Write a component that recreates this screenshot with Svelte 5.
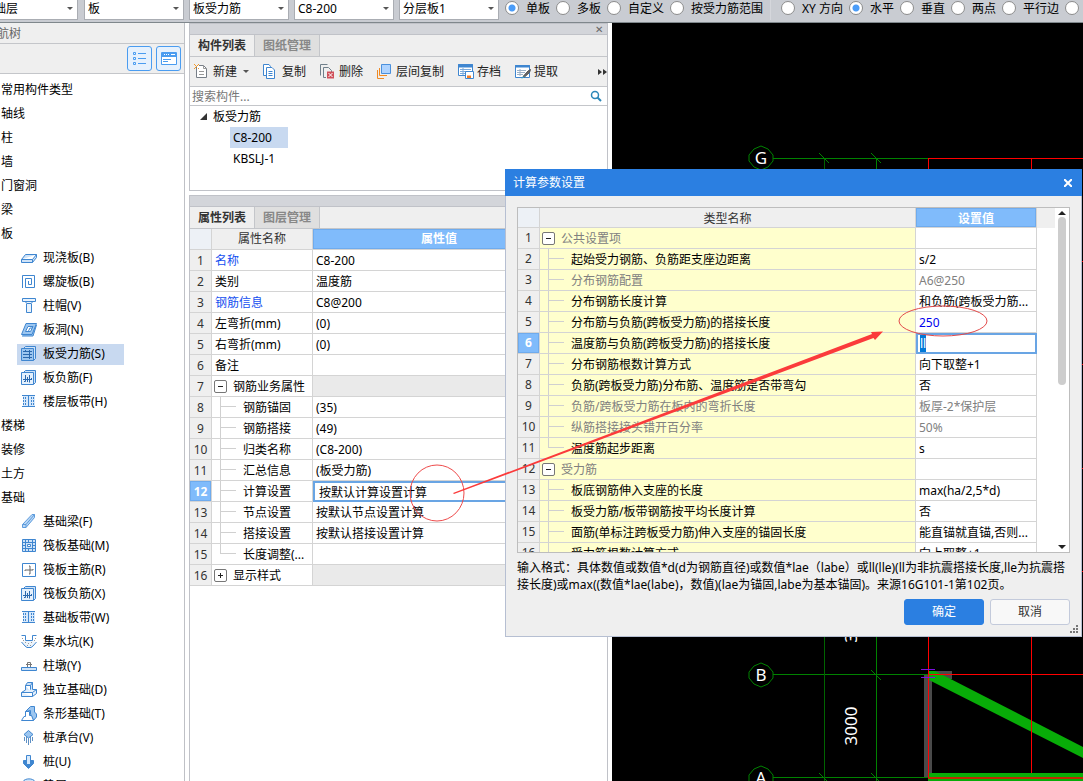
<script>
    import { onMount } from "svelte";

    const BLUE = "#3f86d0";
    const PALE = "#cfe3f8";

    // each icon is a list of [path, fill, stroke]
    const icons = {
        slab: [["M.5 10.5L4.5 5.5H15.5L11.5 10.5ZM.5 10.5V13.5H11.5L15.5 8.5V5.5M11.5 10.5V13.5", PALE, BLUE]],
        spiral: [["M1.5 15V2.5H13.5V14.5H4.5V5.5H10.5V11.5H7.5V8", "none", BLUE]],
        cap: [["M1.5 1.5H14.5V4.5H1.5ZM4 4.5L6 6.5H10L12 4.5M5.5 6.5V15.5H10.5V6.5", "#eaf3fc", BLUE]],
        hole: [["M5 2.5H15.5L11 13.5H.5ZM15.5 4L12 15H1", "#9cc6f0", BLUE], ["M7 5.5H12L9.5 10.5H4.5Z", "#fff", BLUE], ["M7.5 10L9 7H11", "none", BLUE]],
        rebar: [["M2.5 3.5L4.5 1.5H14.5V13.5L12.5 15.5", PALE, BLUE], ["M.5 3.5H12.5V15.5H.5Z", "#9cc6f0", BLUE], ["M2 6.5H11M2 9.5H11M2 12.5H11M4.5 5V7M8.5 5V14", "none", "#2a68ad"]],
        negative: [["M2.5 3.5L4.5 1.5H14.5V13.5L12.5 15.5", PALE, BLUE], ["M.5 3.5H12.5V15.5H.5Z", "#e4f0fc", BLUE], ["M2 10.5H11M4.5 6V12.5H3M8.5 6V13.5M6.5 8V13M10.5 9V11", "none", "#2a68ad"]],
        strip: [["M2 3H14V14H2Z", "#d8e9fb", "none"], ["M7.5 3V13M1 2.5H14M1 13.5H14", "none", BLUE], ["M2.5 4V6M2.5 7V9M2.5 10V12M4.5 4V6M4.5 7V9M4.5 10V12M10.5 4V6M10.5 7V9M10.5 10V12M12.5 4V6M12.5 7V9M12.5 10V12", "none", BLUE]],
        beam: [["M1.500 11.5L11 1.5H13.5V4.5L5 14.5H1.5ZM1.5 11.5H5V14.5M5 11.5L13.5 1.5", "#b9d7f6", "#5c9bdc"]],
        raft: [["M1.5 2.5H14.5V14.5H1.5ZM4.5 2V15M11.5 2V15M1 5.5H15M1 11.5H15M7.5 2V5M7.5 12V15M1 8.5H4M12 8.5H15", PALE, BLUE], ["M6.5 7.5H9.5V9.5H6.5Z", "#fff", BLUE]],
        mainbar: [["M1.5 2.5H14.5V15.5H1.5Z", "#fff", BLUE], ["M4 10V9H12V8M8 13H9V5H8", "none", "#666"]],
        pit: [["M1 9L4 13L6 15H10L12 13L15 9L12 8H4Z", "#edf4fb", "none"], ["M.5 2.5H4.5V7.5H11.5V2.5H15.5M.5 9L4 13L6 14.5H10L12 13L15.5 9", "none", BLUE], ["M1 5.500H2M2 7.5H3M4 9.5H5M7 10.5H8M10 9.5H11M6 12.5H7M9 12.5H10M13 7.5H14M14 5.5H15", "none", "#999"]],
        pier: [["M6.5 5.5H9.5V10.5H6.5ZM5 7.5H11", "#fff", "#777"], ["M.5 10.5H15.5V13.5H.5Z", PALE, BLUE]],
        footing: [["M4.500 4.5L6.5 1.5H11.5V8.5L9.5 10.5H4.5ZM9.5 10.5V4.5H4.500M9.5 4.5L11.5 1.5", PALE, BLUE], ["M4.5 9L.5 11.5V15.5H11.5L15.5 12.5V8.5H11.5M.5 11.5H11.5V15.5M11.5 11.5L15.5 8.5", "#e4f0fc", BLUE]],
        stripfoot: [["M4.5 6.5L9.5 1.5H13.5V7L15.5 9V12L12.5 15.5L9.5 9V5.5Z", "#9cc6f0", BLUE], ["M4.5 6.5H8.5V10.5H10.5L12.5 15.5H.5L3 11.5H4.5Z", "#fff", BLUE]],
        pilecap: [["M7.5 1.500L12 5.5L7.5 9L3 5.5Z", "#9cc6f0", BLUE], ["M3.5 8V12M5.5 8V14M7.5 9V16M9.5 8V14M11.5 8V12", "none", "#5f90c4"]],
        pile: [["M5.5 7.5H2.5V10.5L7.5 15.5L12.5 10.5V7.5H9.5", BLUE, BLUE], ["M5.5 2.5H9.5V11.5H5.5Z", "#d8eafc", BLUE]],
        cushion: [["M2 4.5C4 1 12 1 14 4.5Z", PALE, BLUE]],
        create: [["M2.5 3V14.5H12.5V5.5L9.5 2.5H5", "#fff", "#777f88"], ["M9.5 2.5V5.5H12.5M5 8.5H10M5 11.5H10", "none", "#999"], ["M0 1.500H1M4 1.500H5M2 3.5H3M0 5.5H1M4 5.5H5M1 3L2 2M4 3L3 2M1 4L2 5", "none", "#f39b2d"]],
        copy: [["M.5 1.500H6L7.5 3.5V12.5H.5Z", "#fff", BLUE], ["M3.5 4.500H9L11.5 7V15.5H3.5Z", "#fff", BLUE], ["M5.5 8.5H9.5M5.5 10.5H9.5M5.5 12.5H9.5", "none", BLUE]],
        remove: [["M.5 12.5V1.500H7.5M3.5 14.5V4.500H8.5L11.5 7.5V9M3.5 14.5H6", "none", "#70808c"], ["M7 8.500H14V15.5H7Z", "#d0505a", "none"], ["M8.5 10L12.5 14M12.5 10L8.5 14", "none", "#fff"]],
        layers: [["M4.5 1.500H13.5V10.5H4.5Z", "#aed3ff", "#4a90dd"], ["M2.500 5V12.5H10M.5 7V15.5H7", "none", "#f08a24"]],
        save: [["M.5 1.500H14.5V12.5H.5Z", "#fff", BLUE], ["M.5 1.500H14.5V4H.5Z", BLUE, BLUE], ["M2 6.500H13M2 8.500H8M2 10.5H7M5 5V12", "none", "#7aa9db"], ["M7.5 8.500H15.5V15.5H7.5Z", "#fff", BLUE], ["M9 12.5H13V15H9Z", "#ef7c27", "none"]],
        extract: [["M.5 2.500H14.5V14.5H.5Z", "#fff", BLUE], ["M.5 2.500H14.5V4H.5Z", BLUE, BLUE], ["M2 7.500H11M2 9.500H10M2 11.5H8M5 6V13", "none", "#9ab0c7"], ["M8 13.5L13 8L15.500 6.500L14.5 9.500L9.500 14Z", "#666", "#555"], ["M7 15.5L9 13.5", "none", "#25b6d2"]]
    };

    const combos = ["基础层", "板", "板受力筋", "C8-200", "分层板1"];
    const modes = ["单板", "多板", "自定义", "按受力筋范围"];
    const directions = ["XY 方向", "水平", "垂直", "两点", "平行边", "弧线"];
    let mode = "单板";
    let direction = "水平";

    const nav = [
        ["常用构件类型"], ["轴线"], ["柱"], ["墙"], ["门窗洞"], ["梁"], ["板"],
        ["现浇板(B)", "slab"],
        ["螺旋板(B)", "spiral"],
        ["柱帽(V)", "cap"],
        ["板洞(N)", "hole"],
        ["板受力筋(S)", "rebar"],
        ["板负筋(F)", "negative"],
        ["楼层板带(H)", "strip"],
        ["楼梯"], ["装修"], ["土方"], ["基础"],
        ["基础梁(F)", "beam"],
        ["筏板基础(M)", "raft"],
        ["筏板主筋(R)", "mainbar"],
        ["筏板负筋(X)", "negative"],
        ["基础板带(W)", "strip"],
        ["集水坑(K)", "pit"],
        ["柱墩(Y)", "pier"],
        ["独立基础(D)", "footing"],
        ["条形基础(T)", "stripfoot"],
        ["桩承台(V)", "pilecap"],
        ["桩(U)", "pile"],
        ["垫层(X)", "cushion"]
    ];
    let current = "板受力筋(S)";

    const tools = [
        ["新建", "create"],
        ["复制", "copy"],
        ["删除", "remove"],
        ["层间复制", "layers"],
        ["存档", "save"],
        ["提取", "extract"]
    ];

    const props = [
        { name: "名称", value: "C8-200", link: true },
        { name: "类别", value: "温度筋" },
        { name: "钢筋信息", value: "C8@200", link: true },
        { name: "左弯折(mm)", value: "(0)" },
        { name: "右弯折(mm)", value: "(0)" },
        { name: "备注", value: "" },
        { name: "钢筋业务属性", group: "minus" },
        { name: "钢筋锚固", value: "(35)", child: true },
        { name: "钢筋搭接", value: "(49)", child: true },
        { name: "归类名称", value: "(C8-200)", child: true },
        { name: "汇总信息", value: "(板受力筋)", child: true },
        { name: "计算设置", value: "按默认计算设置计算", child: true, active: true },
        { name: "节点设置", value: "按默认节点设置计算", child: true },
        { name: "搭接设置", value: "按默认搭接设置计算", child: true },
        { name: "长度调整(...", value: "", child: true, last: true },
        { name: "显示样式", group: "plus" }
    ];

    const params = [
        { name: "公共设置项", group: "minus", dim: true },
        { name: "起始受力钢筋、负筋距支座边距离", value: "s/2", child: true },
        { name: "分布钢筋配置", value: "A6@250", child: true, dim: true },
        { name: "分布钢筋长度计算", value: "和负筋(跨板受力筋...", child: true },
        { name: "分布筋与负筋(跨板受力筋)的搭接长度", value: "250", child: true, changed: true },
        { name: "温度筋与负筋(跨板受力筋)的搭接长度", value: "ll", child: true, active: true },
        { name: "分布钢筋根数计算方式", value: "向下取整+1", child: true },
        { name: "负筋(跨板受力筋)分布筋、温度筋是否带弯勾", value: "否", child: true },
        { name: "负筋/跨板受力筋在板内的弯折长度", value: "板厚-2*保护层", child: true, dim: true },
        { name: "纵筋搭接接头错开百分率", value: "50%", child: true, dim: true },
        { name: "温度筋起步距离", value: "s", child: true, last: true },
        { name: "受力筋", group: "minus", dim: true },
        { name: "板底钢筋伸入支座的长度", value: "max(ha/2,5*d)", child: true },
        { name: "板受力筋/板带钢筋按平均长度计算", value: "否", child: true },
        { name: "面筋(单标注跨板受力筋)伸入支座的锚固长度", value: "能直锚就直锚,否则...", child: true },
        { name: "受力筋根数计算方式", value: "向上取整+1", child: true }
    ];

    let editor;

    onMount(() => {
        editor.focus();
        editor.select();
    });
</script>

{#snippet icon(name)}
    <svg class="icon" width="16" height="16" viewBox="0 1 16 16" aria-hidden="true">
        {#each icons[name] as [d, fill, stroke]}
            <path {d} {fill} {stroke} />
        {/each}
    </svg>
{/snippet}

{#snippet nameCell(row)}
    <div class="name-cell">
        {#if row.group}
            <button class="toggle {row.group}" aria-label={row.name}></button>
        {:else if row.child}
            <span class="branch" class:last={row.last}></span>
        {/if}
        <span class="label">{row.name}</span>
    </div>
{/snippet}

<div class="app">
    <header class="topbar">
        {#each combos as item}
            <div class="combo">
                <select aria-label={item}><option>{item}</option></select>
            </div>
        {/each}
        <div class="radios">
            {#each modes as item}
                <label><input type="radio" bind:group={mode} value={item} /><span>{item}</span></label>
            {/each}
        </div>
        <div class="radios second">
            {#each directions as item}
                <label><input type="radio" bind:group={direction} value={item} /><span>{item}</span></label>
            {/each}
        </div>
    </header>

    <main>
        <aside class="sidebar">
            <div class="side-title"><span>导航树</span></div>
            <div class="side-tools">
                <button aria-label="列表">
                    <svg width="16" height="16" viewBox="0 0 16 16">
                        <path d="M1.5 1.5H3.5V3.5H1.5ZM1.5 6.5H3.5V8.5H1.5ZM1.5 11.5H3.5V13.5H1.5ZM6 2.5H14M6 7.5H14M6 12.5H14" fill="none" stroke="#4a9cf0" />
                    </svg>
                </button>
                <button aria-label="面板">
                    <svg width="16" height="16" viewBox="0 0 16 16">
                        <path d="M.5 1.5H15.5V13.5H.5Z" fill="#fff" stroke="#4a9cf0" />
                        <path d="M1 2H15V6H1Z" fill="#4a9cf0" />
                        <path d="M3 3.5H4M5 3.5H6M7 3.5H8M10 3.5H14" stroke="#fff" />
                        <path d="M2 8.5H10M2 10.5H7" stroke="#4a9cf0" />
                    </svg>
                </button>
            </div>
            <ul class="nav">
                {#each nav as [label, name]}
                    <li class:child={name}>
                        <button class:selected={label === current} on:click={() => current = label}>
                            {#if name}{@render icon(name)}{/if}
                            {label}
                        </button>
                    </li>
                {/each}
            </ul>
        </aside>

        <div class="docks">
            <section class="dock upper">
                <div class="strip"><button aria-label="关闭">✕</button></div>
                <div class="tabs">
                    <button class="on">构件列表</button>
                    <button>图纸管理</button>
                </div>
                <div class="tools">
                    {#each tools as [label, name]}
                        <button class:drop={name === "create"}>{@render icon(name)}{label}</button>
                    {/each}
                    <button class="more" aria-label="更多">
                        <svg width="9" height="6" viewBox="0 0 9 6"><path d="M0 0L4 3L0 6ZM5 0L9 3L5 6Z" fill="#333" /></svg>
                    </button>
                </div>
                <div class="search">
                    <input type="text" placeholder="搜索构件..." aria-label="搜索构件" />
                    <svg width="12" height="12" viewBox="0 0 12 12" aria-hidden="true">
                        <circle cx="5" cy="5" r="3.5" fill="none" stroke="#2b87b8" stroke-width="1.5" />
                        <path d="M7.5 7.5L11 11" stroke="#2b87b8" stroke-width="2" />
                    </svg>
                </div>
                <ul class="tree">
                    <li class="root"><svg width="7" height="7" viewBox="0 0 7 7"><path d="M7 0V7H0Z" fill="#333" /></svg>板受力筋</li>
                    <li><button class="selected">C8-200</button></li>
                    <li><button>KBSLJ-1</button></li>
                </ul>
            </section>

            <section class="dock lower">
                <div class="strip"></div>
                <div class="tabs">
                    <button class="on">属性列表</button>
                    <button>图层管理</button>
                </div>
                <div class="prop-wrap">
                    <table class="props">
                        <thead>
                            <tr><th class="num"></th><th class="prop-name">属性名称</th><th class="value">属性值</th></tr>
                        </thead>
                        <tbody>
                            {#each props as row, i}
                                <tr class:active={row.active} class:group={row.group}>
                                    <td class="num">{i + 1}</td>
                                    <td class:link={row.link}>{@render nameCell(row)}</td>
                                    <td class="value">
                                        {#if row.active}
                                            <input type="text" bind:value={row.value} aria-label={row.name} />
                                        {:else}
                                            {row.value ?? ""}
                                        {/if}
                                    </td>
                                </tr>
                            {/each}
                        </tbody>
                    </table>
                </div>
            </section>
        </div>

        <div class="canvas">
            <svg width="471" height="758" viewBox="612 23 471 758">
                <g fill="none" stroke="#008200">
                    <path d="M773 158.5H928M773 674.5H928M773 777.5H928M876.5 158V781" />
                    <path d="M824.5 158V781" stroke="#006400" />
                    <path d="M819 153L829 163M871 153L881 163M871 670L881 680M819 773L829 783M871 773L881 783" />
                    {#each [158, 675, 778] as y}
                        <path d="M761 {y - 12}l7 3l5 6l0 6l-5 6l-7 3l-7 -3l-5 -6l0 -6l5 -6z" />
                    {/each}
                </g>
                <path d="M924 675H932V777H924ZM928 671H952V679H928Z" fill="#4a4a4a" />
                <path d="M929 671H935L1083 747V758L929 680ZM928 773H1083V781H928Z" fill="#08ac08" />
                <path d="M928 158.5H1083M928.5 158V778M1031.5 158V773M928 674.5H1083M928 261.5H1083M928 364.5H1083M928 468.5H1083M928 571.5H1083" fill="none" stroke="#f00" />
                <path d="M928 778H1083" stroke="#c22a00" stroke-width="2" />
                <path d="M921 669.5H935M921 677.5H935" stroke="#7b10e0" />
                <g class="axis">
                    <text x="761" y="164">G</text>
                    <text x="761" y="681">B</text>
                    <text x="761" y="784">A</text>
                    <text transform="translate(857 726) rotate(-90)">3000</text>
                    <text transform="translate(857 638) rotate(-90)">3</text>
                </g>
            </svg>
        </div>
    </main>

    <div class="dialog" role="dialog" aria-label="计算参数设置">
        <div class="title">
            <span>计算参数设置</span>
            <button aria-label="关闭">
                <svg width="8" height="8" viewBox="0 0 8 8"><path d="M0 0L8 8M8 0L0 8" stroke="#fff" stroke-width="2" /></svg>
            </button>
        </div>
        <div class="body">
            <div class="grid-box">
                <div class="grid-view">
                    <table class="params">
                        <thead>
                            <tr><th class="num"></th><th>类型名称</th><th class="value">设置值</th><th class="rest"></th></tr>
                        </thead>
                        <tbody>
                            {#each params as row, i}
                                <tr class:active={row.active} class:dim={row.dim}>
                                    <td class="num">{i + 1}</td>
                                    <td class="yellow">{@render nameCell(row)}</td>
                                    <td class="value" class:changed={row.changed}>
                                        {#if row.active}
                                            <input type="text" bind:this={editor} bind:value={row.value} aria-label={row.name} />
                                        {:else}
                                            {row.value ?? ""}
                                        {/if}
                                    </td>
                                    <td class="rest"></td>
                                </tr>
                            {/each}
                        </tbody>
                    </table>
                </div>
                <div class="scrollbar">
                    <i class="up"></i>
                    <div class="track"><div class="thumb"></div></div>
                    <i class="down"></i>
                </div>
            </div>
            <p>
                输入格式：具体数值或数值*d(d为钢筋直径)或数值*lae（labe）或ll(lle)(ll为非抗震搭接长度,lle为抗震搭<br />接长度)或max((数值*lae(labe)，数值)(lae为锚固,labe为基本锚固)。来源16G101-1第102页。
            </p>
            <div class="actions">
                <button class="primary">确定</button>
                <button>取消</button>
            </div>
        </div>
        <svg class="grip" width="9" height="9" viewBox="0 0 9 9" aria-hidden="true">
            <path d="M6 0h2v2h-2zM3 3h2v2h-2zM6 3h2v2h-2zM0 6h2v2h-2zM3 6h2v2h-2zM6 6h2v2h-2z" fill="#777" />
        </svg>
    </div>

    <svg class="marks" width="1083" height="781" viewBox="0 0 1083 781" aria-hidden="true">
        <ellipse cx="437" cy="493" rx="27" ry="28" fill="none" stroke="#ee4b4b" />
        <ellipse cx="943" cy="321" rx="44" ry="15" fill="none" stroke="#e34a4a" />
        <path d="M453 493L872 334L871 332L883 331.500L875 340L873.500 338L454 494Z" fill="#fb3b3b" />
    </svg>
</div>

<style>
    :global(body) {
        overflow: hidden;
    }

    .app {
        position: relative;
        display: flex;
        flex-direction: column;
        height: 100vh;
        overflow: hidden;
        background: #fff;
        color: #000;
        font-family: "Noto Sans", "Noto Sans CJK SC", sans-serif;
        font-size: 12px;
        line-height: 20px;
    }

    button, input, select {
        font: inherit;
        color: inherit;
        margin: 0;
        padding: 0;
        border: none;
        border-radius: 0;
        background: none;
        box-sizing: border-box;
        outline: none;
    }

    button {
        white-space: nowrap;
    }

    ul {
        list-style: none;
        margin: 0;
        padding: 0;
    }

    svg {
        flex: none;
        display: block;
    }

    .icon {
        overflow: visible;
    }

    .topbar {
        display: flex;
        align-items: flex-end;
        flex: none;
        height: 23px;
        box-sizing: border-box;
        padding-bottom: 2px;
        background: #c9ccd2;
        border-bottom: 1px solid #7f878c;
        overflow: hidden;
    }

    .combo {
        position: relative;
        flex: none;
        width: 100px;
        margin-right: 5px;
    }

    .combo:first-child {
        margin-left: -22px;
        margin-right: 6px;
    }

    .combo select {
        display: block;
        width: 100%;
        height: 24px;
        padding: 2px 4px 0 3px;
        appearance: none;
        background: #fff;
        border: 1px solid #aaadb3;
    }

    .combo::after {
        content: "";
        position: absolute;
        right: 5px;
        top: 11px;
        border: 3px solid transparent;
        border-top-color: #555;
        border-bottom: none;
    }

    .radios {
        display: flex;
        flex: none;
        gap: 6px;
        padding: 0 7px 0 1px;
    }

    .second {
        padding-left: 10px;
        border-left: 1px solid #d5d7dc;
    }

    .radios label {
        display: flex;
        align-items: center;
        gap: 7px;
        height: 24px;
        white-space: nowrap;
    }

    .radios span {
        padding-top: 2px;
    }

    .radios input {
        appearance: none;
        width: 14px;
        height: 14px;
        border: 1px solid #8c8c8c;
        border-radius: 50%;
        background: #fff;
    }

    .radios input:checked {
        background: radial-gradient(circle, #4a9cf8 3px, #fff 4px);
    }

    main {
        display: flex;
        flex: 1;
        min-height: 0;
    }

    .sidebar {
        flex: none;
        width: 185px;
        box-sizing: border-box;
        border-right: 1px solid #bfc1c6;
        overflow: hidden;
    }

    .side-title {
        height: 20px;
        line-height: 22px;
        background: #efefef;
        border-bottom: 1px solid #c4c6ca;
        color: #666;
        overflow: hidden;
    }

    .side-title span {
        margin-left: -15px;
    }

    .side-tools {
        display: flex;
        justify-content: flex-end;
        gap: 4px;
        height: 29px;
        padding: 0 3px;
        align-items: center;
        background: #efefef;
        border-bottom: 1px solid #c4c6ca;
    }

    .side-tools button {
        display: flex;
        align-items: center;
        justify-content: center;
        width: 25px;
        height: 25px;
        background: #e6f1fd;
        border: 1px solid #4a9cf0;
        border-radius: 3px;
    }

    .nav {
        padding-top: 4px;
    }

    .nav li {
        display: flex;
        align-items: center;
        height: 24px;
    }

    .nav li.child {
        padding-left: 17px;
    }

    .nav button {
        display: flex;
        align-items: center;
        gap: 6px;
        height: 21px;
        padding-left: 1px;
    }

    .nav .child button {
        padding: 0 19px 0 4px;
    }

    .selected {
        background: #c8d9f0;
    }

    .docks {
        display: flex;
        flex-direction: column;
        flex: none;
        width: 419px;
        margin: 0 4px;
    }

    .dock {
        border: 1px solid #c0c2c8;
        box-sizing: border-box;
    }

    .upper {
        height: 168px;
        margin-bottom: 4px;
    }

    .lower {
        flex: 1;
        border-bottom: none;
    }

    .strip {
        display: flex;
        justify-content: flex-end;
        height: 10px;
        background: #d3d5da;
        border-bottom: 1px solid #c0c2c8;
    }

    .strip button {
        width: 16px;
        font-size: 10px;
        line-height: 10px;
        color: #666;
    }

    .tabs {
        display: flex;
        height: 21px;
        background: #efefef;
        border-bottom: 1px solid #c4c6ca;
    }

    .tabs button {
        width: 65px;
        font-weight: bold;
        color: #888;
        background: #dfdfdf;
        border-right: 1px solid #c4c6ca;
    }

    .tabs .on {
        color: #333;
        background: #efefef;
    }

    .tools {
        display: flex;
        align-items: center;
        gap: 14px;
        height: 29px;
        padding: 0 0 0 4px;
        background: #efefef;
        border-bottom: 1px solid #c4c6ca;
        color: #222;
    }

    .tools button {
        display: flex;
        align-items: center;
        gap: 3px;
    }

    .tools .drop::after {
        content: "";
        margin-left: 3px;
        border: 3px solid transparent;
        border-top-color: #555;
        border-bottom: none;
    }

    .tools .more {
        margin-left: auto;
    }

    .search {
        display: flex;
        align-items: center;
        height: 18px;
        padding: 0 5px 0 2px;
        border-bottom: 1px solid #c4c6ca;
    }

    .search input {
        flex: 1;
        height: 18px;
        padding-top: 2px;
    }

    .search input::placeholder {
        color: #777;
    }

    .tree li {
        height: 21px;
        padding-left: 40px;
    }

    .tree .root {
        display: flex;
        align-items: center;
        gap: 6px;
        padding-left: 10px;
    }

    .tree button {
        min-width: 58px;
        height: 21px;
        padding-left: 3px;
        text-align: left;
    }

    .prop-wrap {
        padding-right: 41px;
    }

    .lower .tabs {
        height: 21px;
    }

    table {
        width: 100%;
        border-collapse: separate;
        border-spacing: 0;
        table-layout: fixed;
    }

    th, td {
        box-sizing: border-box;
        height: 21px;
        padding: 0;
        border-right: 1px solid #d4d4d4;
        border-bottom: 1px solid #d4d4d4;
        line-height: 20px;
        white-space: nowrap;
        overflow: hidden;
    }

    th {
        background: #efefef;
        color: #333;
        font-weight: normal;
    }

    .num {
        width: 22px;
        text-align: center;
        color: #333;
        background: #efefef;
    }

    th.num {
        background: #edf1f6;
    }

    .prop-name {
        width: 101px;
    }

    th.value {
        background: #80bbfb;
        color: #fff;
        font-weight: bold;
        box-shadow: inset 0 0 0 1px #6fabed;
    }

    td.value {
        padding-left: 3px;
        background: #fff;
    }

    .group td.value {
        background: #eaeaea;
    }

    .link {
        color: #1450f0;
    }

    .active td.num {
        background: #80bbfb;
        color: #fff;
        font-weight: bold;
        box-shadow: inset 0 0 0 1px #6fabed;
    }

    .props td {
        padding-top: 2px;
        line-height: 18px;
    }

    .props td:nth-child(2) {
        padding-top: 0;
    }

    .active td.value {
        padding: 0;
        border: none;
    }

    td input {
        display: block;
        width: 100%;
        height: 21px;
        padding-left: 4px;
        border: 2px solid #69a5e4;
    }

    .params td input {
        padding-left: 2px;
    }

    td input::selection {
        background: #0078d7;
        color: #fff;
    }

    .name-cell {
        display: flex;
        align-items: center;
        height: 20px;
        padding-left: 2px;
    }

    .label {
        margin-left: 1px;
        padding-top: 2px;
    }

    .branch {
        flex: none;
        width: 16px;
        height: 20px;
        margin: 0 6px;
        background:
            linear-gradient(#d0d0d0, #d0d0d0) 0 0 / 1px 100% no-repeat,
            linear-gradient(#d0d0d0, #d0d0d0) 0 9px / 16px 1px no-repeat;
    }

    .branch.last {
        background-size: 1px 10px, 16px 1px;
    }

    .toggle {
        flex: none;
        width: 13px;
        height: 13px;
        margin-right: 5px;
        border: 1px solid #777;
        border-radius: 2px;
        background: linear-gradient(#222, #222) center / 5px 1px no-repeat #fff;
    }

    .toggle.plus {
        background:
            linear-gradient(#222, #222) center / 5px 1px no-repeat,
            linear-gradient(#222, #222) center / 1px 5px no-repeat #fff;
    }

    .canvas {
        flex: 1;
        min-width: 0;
        overflow: hidden;
        background: #000;
    }

    .axis {
        fill: #fff;
        font-size: 17px;
        text-anchor: middle;
    }

    .dialog {
        position: absolute;
        top: 169px;
        right: 1px;
        display: flex;
        flex-direction: column;
        width: 577px;
        height: 468px;
        box-sizing: border-box;
        background: #efefef;
        border: 1px solid #b6bfd2;
        border-top: none;
    }

    .title {
        display: flex;
        align-items: center;
        justify-content: space-between;
        flex: none;
        height: 27px;
        margin: 0 -1px;
        padding: 0 10px 0 8px;
        background: #2b7fe1;
        color: #fff;
    }

    .body {
        display: flex;
        flex-direction: column;
        flex: 1;
        min-height: 0;
        padding: 11px;
    }

    .grid-box {
        display: flex;
        flex: 1;
        min-height: 0;
        border: 1px solid #bdbdbd;
        background: #fff;
    }

    .grid-view {
        flex: 1;
        overflow: hidden;
    }

    .params th {
        height: 20px;
        padding-top: 2px;
        line-height: 17px;
    }

    .params td.value {
        padding-top: 2px;
        line-height: 18px;
    }

    .params .active td.value {
        padding-top: 0;
    }

    .params .value {
        width: 121px;
    }

    .params .rest {
        width: 18px;
        border: none;
    }

    .yellow {
        background: #ffffcd;
    }

    .dim td:not(.num) {
        color: #808080;
    }

    td.changed {
        color: #0000ee;
    }

    .scrollbar {
        display: flex;
        flex-direction: column;
        align-items: center;
        width: 14px;
        padding: 3px 0;
        box-sizing: border-box;
    }

    .scrollbar i {
        border: 4px solid transparent;
    }

    .scrollbar .up {
        border-top: none;
        border-bottom-color: #222;
    }

    .scrollbar .down {
        border-bottom: none;
        border-top-color: #222;
    }

    .track {
        flex: 1;
        padding: 2px 0 4px;
    }

    .thumb {
        width: 8px;
        height: 52%;
        border-radius: 4px;
        background: #cdcdcd;
    }

    p {
        margin: 6px 0;
        line-height: 17px;
        white-space: nowrap;
    }

    .actions {
        display: flex;
        justify-content: flex-end;
        gap: 6px;
    }

    .actions button {
        width: 80px;
        height: 26px;
        border: 1px solid #c3cadb;
        border-radius: 3px;
        background: #f8f8f8;
        color: #333;
    }

    .actions .primary {
        background: #2b7fe1;
        border-color: #2b7fe1;
        color: #fff;
    }

    .grip {
        position: absolute;
        right: 2px;
        bottom: 2px;
    }

    .marks {
        position: absolute;
        top: 0;
        left: 0;
        pointer-events: none;
    }
</style>
